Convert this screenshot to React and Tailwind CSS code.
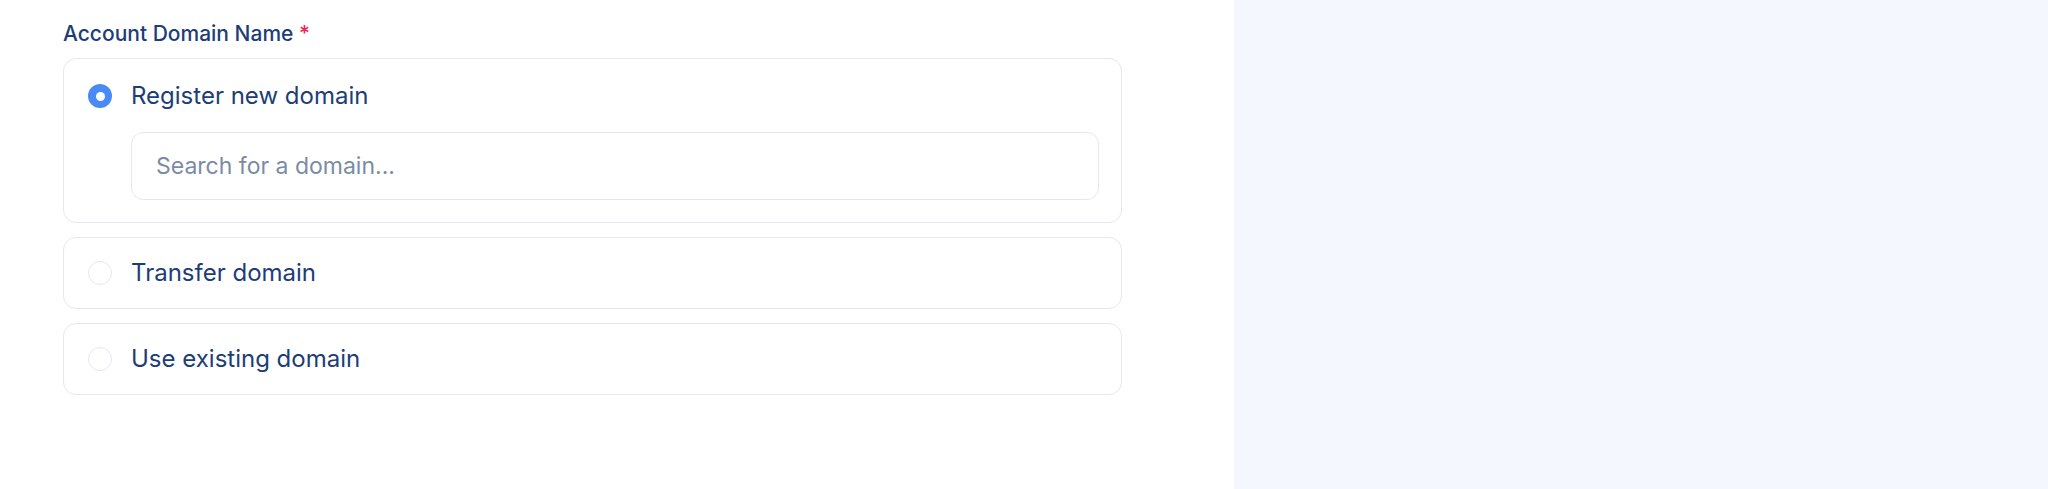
import React, { useState } from "react";

const options = [
  { id: "register", label: "Register new domain" },
  { id: "transfer", label: "Transfer domain" },
  { id: "existing", label: "Use existing domain" },
];

function Radio({ checked }) {
  if (checked) {
    return (
      <span className="w-6 h-6 rounded-full bg-[#4a8af4] flex items-center justify-center shrink-0">
        <span className="w-[9px] h-[9px] rounded-full bg-white" />
      </span>
    );
  }
  return <span className="w-6 h-6 rounded-full border-[1.5px] border-[#e6e8ef] bg-white shrink-0" />;
}

export default function App() {
  const [selected, setSelected] = useState("register");
  const [query, setQuery] = useState("");

  return (
    <div className="flex w-full h-[489px] font-['Inter','Liberation_Sans',sans-serif]">
      {/* Form column */}
      <div className="w-[1234px] bg-white pl-[63px] pr-[112px] pt-[20px]">
        <label className="block text-[21px] leading-[28px] font-medium text-[#1d3d78] mb-[10px]">
          Account Domain Name <span className="text-[#f0245a]">*</span>
        </label>

        <div className="flex flex-col gap-[14px]">
          {options.map((opt) => {
            const isOn = selected === opt.id;
            return (
              <div
                key={opt.id}
                onClick={() => setSelected(opt.id)}
                className={
                  isOn
                    ? "border border-[#e6e8ef] rounded-[13px] pl-6 pr-[22px] pt-[21px] pb-[22px] cursor-pointer"
                    : "border border-[#e6e8ef] rounded-[13px] px-6 py-[19px] cursor-pointer"
                }
              >
                <div className="flex items-center h-8 gap-[19px]">
                  <Radio checked={isOn} />
                  <span className="text-[24px] leading-[32px] text-[#1d3d78]">{opt.label}</span>
                </div>
                {isOn && opt.id === "register" && (
                  <div className="mt-[20px] pl-[43px]">
                    <input
                      type="text"
                      value={query}
                      onChange={(e) => setQuery(e.target.value)}
                      placeholder="Search for a domain..."
                      className="w-full h-[68px] border border-[#e6e8ef] rounded-[12px] px-6 text-[23px] text-[#1d3d78] placeholder-[#7b8ba4] focus:outline-none"
                    />
                  </div>
                )}
              </div>
            );
          })}
        </div>
      </div>

      {/* Side panel */}
      <div className="flex-1 bg-[#f4f7fd]" />
    </div>
  );
}
